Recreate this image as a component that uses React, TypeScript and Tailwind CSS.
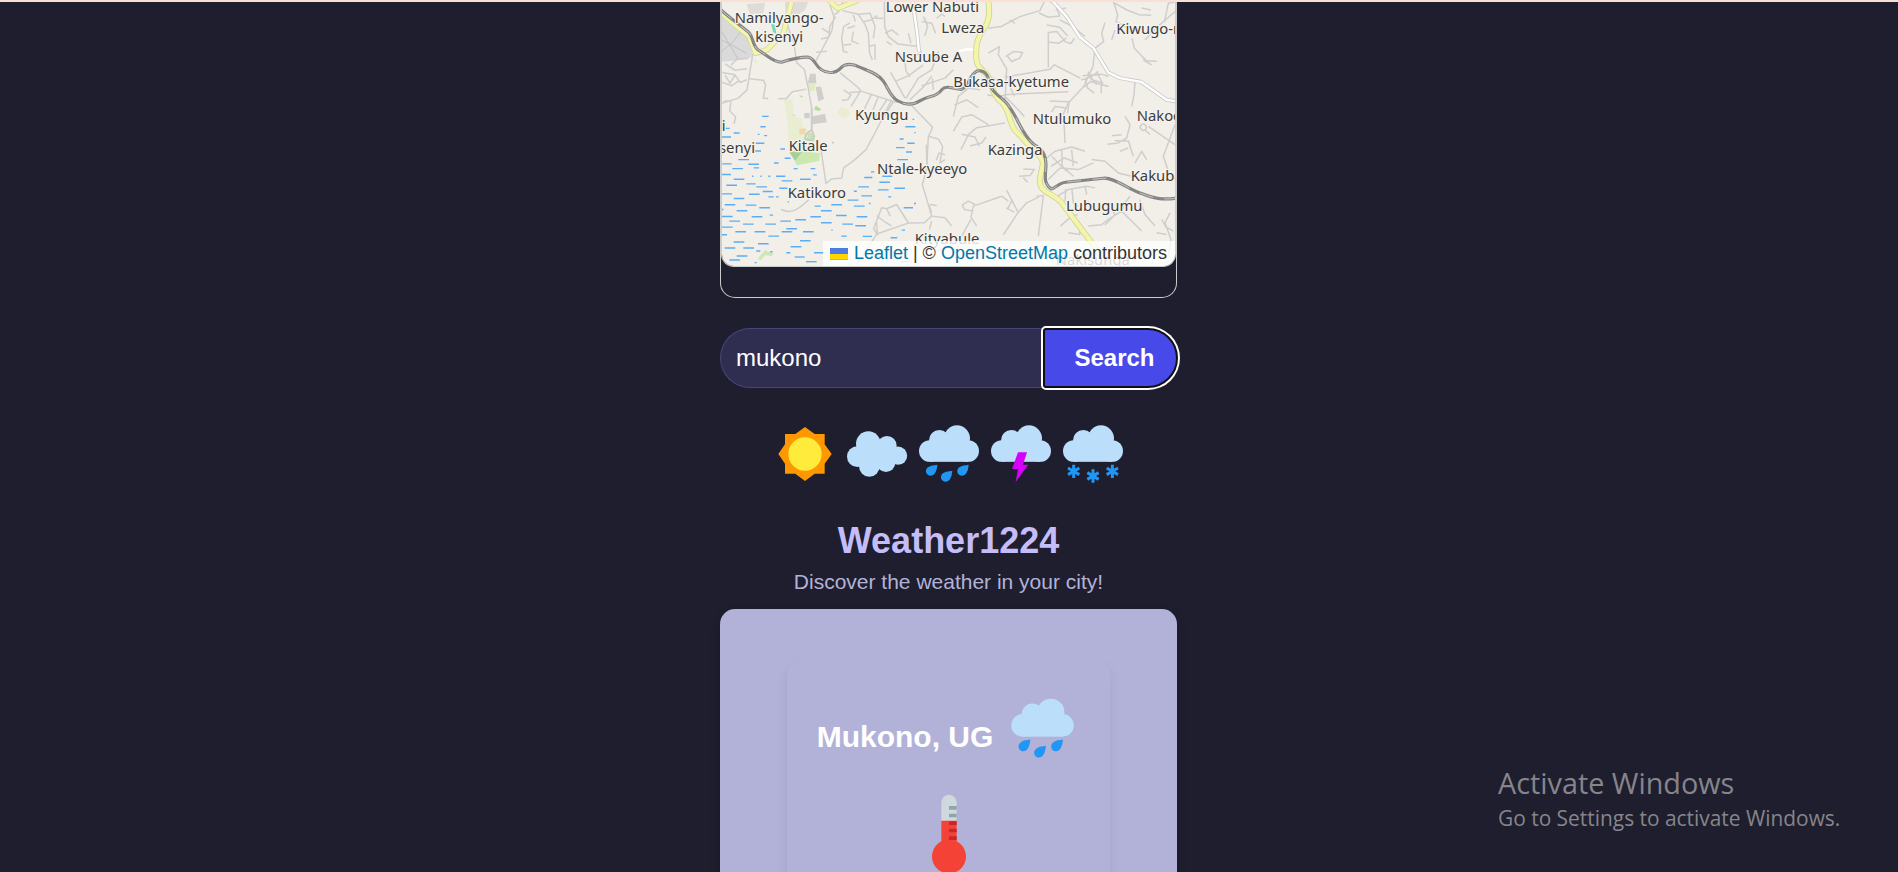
import type { ReactNode } from "react";

type Dash = [number, number, number];

/* Marsh hatching: centre x, centre y, length */
const marsh: Dash[] = [
  [151, 350, 20], [144, 381, 16], [131, 404, 5], [152, 408, 9], [37, 386, 14], [65, 400, 18], [34, 412, 28], [135, 431, 26],
  [595, 359, 5], [586, 381, 30], [600, 399, 4], [560, 418, 12], [588, 431, 22], [556, 444, 26], [203, 448, 14],
  [582, 457, 18], [563, 480, 32], [128, 454, 20], [86, 480, 32], [36, 493, 28], [116, 494, 32], [184, 490, 14],
  [218, 476, 18], [68, 507, 32], [124, 505, 16], [242, 507, 12], [294, 507, 14], [34, 525, 28], [197, 530, 28], [72, 539, 32],
  [113, 530, 4], [138, 530, 4], [163, 530, 6], [300, 526, 11], [216, 544, 32], [271, 539, 32], [108, 553, 28], [50, 557, 32],
  [140, 562, 32], [158, 576, 30], [205, 566, 24], [460, 534, 24], [473, 517, 10], [509, 548, 32], [517, 530, 30], [446, 562, 32],
  [505, 571, 32], [421, 575, 9], [36, 583, 30], [118, 584, 32], [168, 592, 16], [187, 592, 8], [72, 597, 32], [414, 602, 32],
  [455, 589, 32], [554, 566, 32], [524, 592, 9], [45, 616, 32], [108, 617, 32], [149, 625, 32], [220, 607, 4], [308, 620, 18],
  [365, 616, 32], [433, 620, 32], [464, 612, 5], [580, 625, 28], [600, 612, 6], [23, 630, 5], [81, 634, 32], [334, 634, 32],
  [37, 651, 32], [126, 652, 32], [169, 647, 10], [302, 652, 32], [379, 648, 32], [441, 652, 32], [59, 665, 32], [212, 665, 32],
  [257, 661, 32], [334, 670, 32], [398, 674, 32], [100, 674, 32], [167, 674, 32], [37, 683, 32], [437, 679, 32], [77, 697, 32],
  [135, 697, 32], [216, 697, 32], [280, 697, 32], [351, 692, 4], [176, 710, 32], [230, 688, 32], [28, 706, 16], [387, 710, 16],
  [457, 711, 28], [537, 715, 20], [565, 692, 10], [72, 728, 32], [145, 733, 32], [271, 724, 32], [243, 742, 32], [45, 746, 32],
  [101, 746, 32], [130, 755, 12], [169, 757, 7], [220, 760, 12], [312, 760, 30], [81, 770, 32], [254, 773, 30], [59, 782, 32],
  [122, 790, 6], [289, 787, 32], [570, 787, 26],
];

const places: { name: string; x: number; y: number }[] = [
  { name: "Namilyango-", x: 59, y: 69 }, { name: "kisenyi", x: 121, y: 126 },
  { name: "Lower Nabuti", x: 512, y: 36 }, { name: "Lweza", x: 679, y: 100 },
  { name: "Nsuube A", x: 539, y: 187 }, { name: "Kyungu", x: 420, y: 361 },
  { name: "Kitale", x: 221, y: 453 }, { name: "senyi", x: 12, y: 459 }, { name: "i", x: 20, y: 395 },
  { name: "Bukasa-kyetume", x: 715, y: 263 }, { name: "Ntulumuko", x: 953, y: 372 },
  { name: "Kiwugo-n", x: 1204, y: 102 }, { name: "Nakoo", x: 1265, y: 363 },
  { name: "Katikoro", x: 218, y: 594 }, { name: "Ntale-kyeeyo", x: 486, y: 522 },
  { name: "Kityabule", x: 599, y: 735 }, { name: "Kazinga", x: 818, y: 467 },
  { name: "Kakuba", x: 1247, y: 543 }, { name: "Lubugumu", x: 1053, y: 636 },
  { name: "Nakisunga", x: 1022, y: 798 },
];

const railway =
  "M18 30C45 55 75 75 103 99C115 113 112 137 129 150C154 164 174 187 199 187C229 178 255 171 280 172C300 176 302 200 318 209C338 222 360 221 376 206C390 188 417 193 432 201C461 214 490 222 505 244C519 263 526 291 548 303C575 319 597 315 619 301C642 288 665 292 680 270C694 254 716 268 739 269C762 263 762 222 789 213C818 209 821 241 830 265C842 289 869 295 884 323C911 360 921 405 956 434C983 448 993 466 993 500C990 534 987 552 1008 568C1020 568 1031 550 1052 548L1165 536C1200 534 1240 570 1280 582C1315 596 1340 602 1385 596";

const mainRoad =
  "M819 0C825 29 826 52 812 78C792 103 780 129 784 178C786 205 805 211 817 226C832 251 829 283 861 309C884 330 881 365 899 390L945 440C968 463 983 473 984 490C980 520 967 548 981 566C995 582 1028 593 1040 610L1145 750L1195 820";

const streets = [
  "M376 219L430 264L438 274L535 305L585 312L640 370L653 383L640 412L635 510L622 555L650 650L628 670L580 671L485 704L430 790",
  "M530 300L480 400L453 450L420 480L386 505L380 535L350 538L333 552L318 450",
  "M128 150L113 164L100 245L96 270L70 295L20 311",
  "M230 20L212 60L224 95L236 125L245 188L268 209L280 267L290 325L290 390",
  "M345 16L357 50L351 90L345 104L300 188M318 117L342 111L344 80L362 50M321 85L345 100M303 157L336 154",
  "M22 218L60 225L75 248L95 240M20 247L50 258L70 244M30 192L60 211L96 207M48 196L65 178L100 175M30 225L45 250L60 225",
  "M103 237L145 241L152 255L145 295L160 297M190 297L214 296L232 276L273 268",
  "M48 304L44 334L62 351L57 373M25 305L44 303",
  "M383 6L371 35L358 45M382 32L430 43L451 75L460 100L464 160L472 180M432 43L465 40L480 80L475 115M405 69L386 80L380 114L385 154L398 158M397 85L420 78M386 135L410 133M415 95L410 123L431 132M460 140L480 135L480 180M415 45L421 65M447 65L468 60L487 47",
  "M508 0L509 80L520 110L548 132L612 140M480 55L505 55M510 100L530 90L550 105M515 125L530 135M580 100L588 130M620 65L650 70L662 100M626 50L638 80L629 108M665 55L680 42L690 50",
  "M620 155L570 188L573 214L585 231M527 218L570 295M543 244L580 228L625 195M573 296L610 235L650 210L670 155M585 300L629 258L650 229M620 258L690 235L715 210M655 270L652 236",
  "M386 270L408 285L398 300L380 302M404 278L435 276L408 320M469 284L445 335M490 291L474 330M516 300L476 360M535 306L498 365",
  "M198 630C230 645 250 630 282 600M475 690L500 625L515 628L526 650M515 628L545 615L580 670M485 648L505 664L530 680M475 685L487 706L485 670",
  "M640 410L670 418L683 440L675 490L690 480M664 482L672 460L690 465M634 435L636 500M650 650L690 655L710 680M640 613L650 640M645 615L665 618M650 665L643 690",
  "M820 160L853 140L850 165L875 207L870 300M820 85L858 80L915 50L975 32L990 0M884 60L900 70M872 170L895 155L923 158L914 175L890 185L878 170",
  "M817 286L850 290L878 284L1060 276M830 234L880 250L898 290M869 232L1005 208L1018 195L1096 235M870 290L900 320L928 350",
  "M990 0L1020 10L1034 48L1000 52L972 39M1022 30L1054 24M1034 60L1074 80L1110 110M995 75L1034 82L1058 108M1000 98L1025 95L1052 126M999 126L1032 130L1054 115M1000 98L1000 203M1052 126L1068 131L1078 115",
  "M1194 0L1208 45L1203 65L1240 85M1170 68L1160 100L1166 125L1140 145L1134 200L1106 260L1060 310L1046 340L1050 430M1200 10L1236 30L1272 44L1308 46M1280 24L1308 30",
  "M1290 120L1330 78L1385 30M1348 66L1360 10L1385 5M1251 115L1258 145L1294 183L1325 184M1284 180L1310 195M1190 120L1200 90",
  "M1102 228L1160 223L1180 230M1110 235L1118 265L1138 280M1120 215L1130 240L1165 250M1145 215L1160 245L1158 280M1098 241L1128 231L1150 215M1108 262L1126 245L1181 260M1118 220L1145 255",
  "M1260 245L1257 285L1250 320M1004 304L1062 306L1058 340M1010 337L1020 320L1055 325M1032 340L1030 360M1300 380L1380 435M1380 375L1345 470L1360 515",
  "M1230 350L1245 375L1235 415L1210 430L1178 434M1190 408L1220 405M1200 423L1240 424L1255 470M1290 390A9 9 0 1 1 1291 376A9 9 0 0 1 1290 390L1305 405",
  "M715 350L730 290L760 265L795 270M718 316L755 300L790 324M715 395L740 352L770 345L820 375M738 450L760 405L785 384L870 370M740 404L780 412L793 440M813 412L800 430L765 439",
  "M925 508L958 510L945 528L912 530M925 535L938 548M972 592L935 610L910 638L865 706M965 590L985 588L970 710M910 640L875 572M874 625L898 638M877 630L892 600",
  "M860 590L775 620L768 653L785 680M860 590L880 605M775 635L748 630L742 616L760 605L780 615M768 660L740 710L710 740L650 760",
  "M990 480L1020 455L1070 442L1110 455M1008 500L1048 475L1088 490M1000 540L1035 505L1090 510L1135 490M1010 470L1055 515M1040 450L1042 500L1075 530M1070 450L1075 500M1028 590L1060 570L1115 560L1140 565M1052 568L1050 605M1071 570L1075 610L1090 620M1110 560L1115 585",
  "M1130 480L1170 485L1210 520L1250 530M1215 455L1240 445M1260 490L1280 455L1295 480M1340 660L1352 682L1375 695M1365 640L1350 670L1368 720L1360 770M1325 700L1355 705",
  "M1036 680L1070 650L1088 645M1065 655L1090 665L1095 705L1060 700M1120 680L1160 676L1180 660L1220 635L1280 695M1170 677L1200 645L1190 630M1220 635L1230 610L1245 590M1274 600L1290 645L1320 680",
];

function MapView() {
  return (
    <svg className="block h-full w-full" viewBox="21 6 1359 794" preserveAspectRatio="none">
      <rect x="0" y="0" width="1400" height="820" fill="#f2efe9" />
      <path d="M0 35L40 50L100 100L112 145L110 172L60 183L0 187Z" fill="#dadada" />
      <path d="M20 95L70 178M20 155L55 125L85 85M20 120L95 160" stroke="#c2c2c2" strokeWidth="3" fill="none" />
      <path d="M95 12L150 8L145 40L105 42ZM210 5L280 5L270 30L240 50L212 35Z" fill="#dedcd8" />
      <path d="M168 70L180 75L184 102L174 96Z" fill="#78dba9" />
      <path d="M207 300L233 298L235 350L258 354L265 385L290 395L270 430L220 425L218 370ZM380 320L400 330L405 345L385 355L365 340Z" fill="#e9edd1" />
      <path d="M252 388L272 386L270 402L254 405Z" fill="#f5d5aa" />
      <path d="M285 222L302 222L304 251L278 250ZM302 262L318 260L327 298L310 305ZM291 350L330 342L335 368L290 374ZM268 340L284 340L284 356L268 356Z" fill="#cfcecb" />
      <path d="M278 252L302 250L298 272L280 275ZM116 174L128 190L120 188Z" fill="#e0eac5" />
      <path d="M252 286L264 290L260 294ZM302 318L318 328L312 334L298 330ZM232 344L242 345L237 349ZM350 425L358 428L354 435Z" fill="#b4dba0" />
      <path d="M280 400L296 400L300 425L272 425Z" fill="#c6e5b0" />
      <path d="M222 456L262 456L272 478L240 484Z" fill="#a7cf97" />
      <path d="M262 456L316 460L312 484L245 497L240 484Z" fill="#cbe8b0" />
      <path d="M128 778L150 753L176 762L170 770L150 768L138 782Z" fill="#cfe6b5" />
      <path d="M290 325L290 390L272 405L270 418L290 422L298 410L290 390" fill="none" stroke="#c9c8c5" strokeWidth="5" />
      <g fill="none" stroke="#cfcecd" strokeWidth="4.5" strokeLinejoin="round">
        {streets.map((d) => (
          <path key={d} d={d} />
        ))}
      </g>
      <g stroke="#5cadf5" strokeWidth="4.2">
        {marsh.map(([x, y, length]) => (
          <line key={`${x}-${y}`} x1={x - length / 2} x2={x + length / 2} y1={y} y2={y} />
        ))}
      </g>
      <g fill="none" strokeLinejoin="round">
        <path d="M592 0L606 95L612 155M1010 0L1055 50L1095 112L1136 145L1180 218L1215 235L1278 246L1355 300L1385 305" stroke="#cbcaca" strokeWidth="12" />
        <path d="M592 0L606 95L612 155M1010 0L1055 50L1095 112L1136 145L1180 218L1215 235L1278 246L1355 300L1385 305M730 155L755 148L785 150" stroke="#ffffff" strokeWidth="7" />
        <path d="M15 35L60 75L102 108L122 160L155 150L205 100L215 60L230 6M340 0L368 25L430 0" stroke="#d5d79c" strokeWidth="17" />
        <path d="M15 35L60 75L102 108L122 160L155 150L205 100L215 60L230 6M340 0L368 25L430 0" stroke="#f4f5ae" strokeWidth="12" />
        <path d={mainRoad} stroke="#d0d39a" strokeWidth="18" />
        <path d={mainRoad} stroke="#f3f5a9" strokeWidth="13" />
        <path d={railway} stroke="#858585" strokeWidth="9.5" />
        <path d={railway} stroke="#c6c6c4" strokeWidth="3" strokeDasharray="42 34" />
      </g>
      <g
        fill="#3c3c3c"
        stroke="#f5f3ee"
        strokeWidth="7"
        strokeLinejoin="round"
        paintOrder="stroke"
        fontSize="44.5"
        fontFamily="'Noto Sans', sans-serif"
      >
        {places.map((place) => (
          <text key={place.name} x={place.x} y={place.y}>
            {place.name}
          </text>
        ))}
      </g>
    </svg>
  );
}

function Icon({ className = "size-[72px]", children }: { className?: string; children: ReactNode }) {
  return (
    <svg className={`block shrink-0 ${className}`} viewBox="0 0 216 216">
      {children}
    </svg>
  );
}

function CloudShape() {
  return (
    <g fill="#bbdefb">
      <circle cx="132" cy="61" r="39" />
      <circle cx="79" cy="67" r="31" />
      <circle cx="50.5" cy="99" r="32.5" />
      <circle cx="165.5" cy="99" r="32.5" />
      <rect x="50" y="67" width="116" height="64.5" />
    </g>
  );
}

function Sun() {
  return (
    <Icon>
      <path d="M48 48H79L108 27L137 48H167V79L188 108L167 137V167H137L108 189L79 167H48V137L28 108L48 79Z" fill="#ff9800" />
      <circle cx="108" cy="108" r="50" fill="#ffeb3b" />
    </Icon>
  );
}

function Clouds() {
  return (
    <Icon>
      <g fill="#bbdefb">
        <circle cx="82" cy="77" r="37" />
        <circle cx="138" cy="83" r="29" />
        <circle cx="49" cy="116" r="31" />
        <circle cx="171" cy="113" r="27.5" />
        <circle cx="85" cy="145" r="31" />
        <circle cx="135" cy="134" r="28" />
        <path d="M60 80H150V140H60Z" />
      </g>
    </Icon>
  );
}

function Rain({ className }: { className?: string }) {
  return (
    <Icon className={className}>
      <CloudShape />
      <g fill="#2196f3">
        <path d="M73 140C72 149 71 158 66 165C62 173 52 176 45 171C37 165 37 154 45 148C53 142 62 142 73 140Z" />
        <path d="M118 158C117 167 116 176 111 183C107 191 97 194 90 189C82 183 82 172 90 166C98 160 107 160 118 158Z" />
        <path d="M167 140C166 149 165 158 160 165C156 173 146 176 139 171C131 165 131 154 139 148C147 142 156 142 167 140Z" />
      </g>
    </Icon>
  );
}

function Storm() {
  return (
    <Icon>
      <CloudShape />
      <path d="M99 103H126L114 140H130L92 192L99 153H81Z" fill="#d500f9" />
    </Icon>
  );
}

function Snow() {
  return (
    <Icon>
      <CloudShape />
      <path
        d="M50 140V180M33 150L67 170M67 150L33 170M108 154V194M91 164L125 184M125 164L91 184M166 140V180M149 150L183 170M183 150L149 170"
        fill="none"
        stroke="#2196f3"
        strokeWidth="9"
      />
    </Icon>
  );
}

function Thermometer() {
  return (
    <svg className="block h-[90px] w-[60px]" viewBox="0 0 180 270">
      <path d="M67 100V43A23 23 0 0 1 113 43V100Z" fill="#cfd8dc" />
      <path d="M67 98H113V160A51 51 0 1 1 67 160Z" fill="#f44336" />
      <path d="M90 54H113V65H90ZM90 77H113V88H90Z" fill="#90a4ae" />
      <path d="M90 100H113V111H90ZM90 122H113V133H90ZM90 145H113V156H90Z" fill="#c62828" />
    </svg>
  );
}

export default function App() {
  return (
    <div className="relative flex h-[872px] w-full flex-col overflow-hidden bg-[#1f1e2e] font-['Liberation_Sans',Arial,sans-serif]">
      <div className="h-[2px] shrink-0 bg-[#f9dfd6]" />
      <main className="flex min-h-0 flex-1 justify-center pr-px">
        <div className="flex w-[457px] shrink-0 flex-col">
          <section className="h-[296px] shrink-0 rounded-b-[15px] border border-t-0 border-[#ccc]">
            <div className="relative h-[265px] overflow-hidden rounded-b-[13px] border border-t-0 border-[#ccc]">
              <MapView />
              <div className="absolute right-0 bottom-0 flex h-[25px] items-center bg-white/80 pr-[8px] pl-[7px] text-[18px] whitespace-nowrap text-[#333]">
                <svg className="mr-[6px] h-[12px] w-[18px]" viewBox="0 0 18 12">
                  <rect width="18" height="6" fill="#4c7be1" />
                  <rect y="6" width="18" height="5" fill="#ffd500" />
                  <rect y="11" width="18" height="1" fill="#e0bc00" />
                </svg>
                <a className="text-[#0078a8]">Leaflet</a>
                <span className="whitespace-pre"> | © </span>
                <a className="text-[#0078a8]">OpenStreetMap</a>
                <span className="whitespace-pre"> contributors</span>
              </div>
            </div>
          </section>

          <form className="mt-[30px] flex h-[60px] shrink-0" onSubmit={(event) => event.preventDefault()}>
            <input
              className="h-full w-[323px] rounded-l-full border border-r-0 border-[#46467a] bg-[#2f2e50] pl-[15px] text-[24px] text-white outline-none"
              defaultValue="mukono"
            />
            <button className="h-full w-[135px] shrink-0 rounded-l-[3px] rounded-r-[30px] border-[2px] border-[#101010] bg-[#4849e9] pl-[8px] text-[24px] font-bold text-white shadow-[0_0_0_2px_#ffffff]">
              Search
            </button>
          </form>

          <div className="mt-[30px] flex shrink-0 justify-center">
            <Sun />
            <Clouds />
            <Rain />
            <Storm />
            <Snow />
          </div>

          <h1 className="mt-[30px] text-center text-[36px] leading-[41px] font-bold text-[#c4bdf9]">Weather1224</h1>
          <p className="mt-[9px] text-center text-[21px] leading-[24px] text-[#b2b2d9]">Discover the weather in your city!</p>

          <section className="mt-[15px] flex h-[400px] shrink-0 justify-center rounded-[15px] bg-[#b2b2d9] pt-[51px] shadow-[0_4px_10px_rgba(0,0,0,0.25)]">
            <div className="flex h-[400px] w-[323px] flex-col items-center rounded-[15px] pt-[31px] shadow-[0_6px_12px_rgba(0,0,0,0.08)]">
              <div className="flex items-center">
                <h2 className="pt-[16px] pr-[12px] text-[30px] leading-[34px] font-bold text-white">Mukono, UG</h2>
                <Rain className="size-[75px]" />
              </div>
              <div className="mt-[22px]">
                <Thermometer />
              </div>
            </div>
          </section>
        </div>
      </main>

      <aside className="absolute top-[764px] left-[1498px] font-['Open_Sans','Noto_Sans',sans-serif] whitespace-nowrap text-[#85858b]">
        <div className="text-[28.8px] leading-[38px]">Activate Windows</div>
        <div className="text-[20.9px] leading-[32px]">Go to Settings to activate Windows.</div>
      </aside>
    </div>
  );
}
